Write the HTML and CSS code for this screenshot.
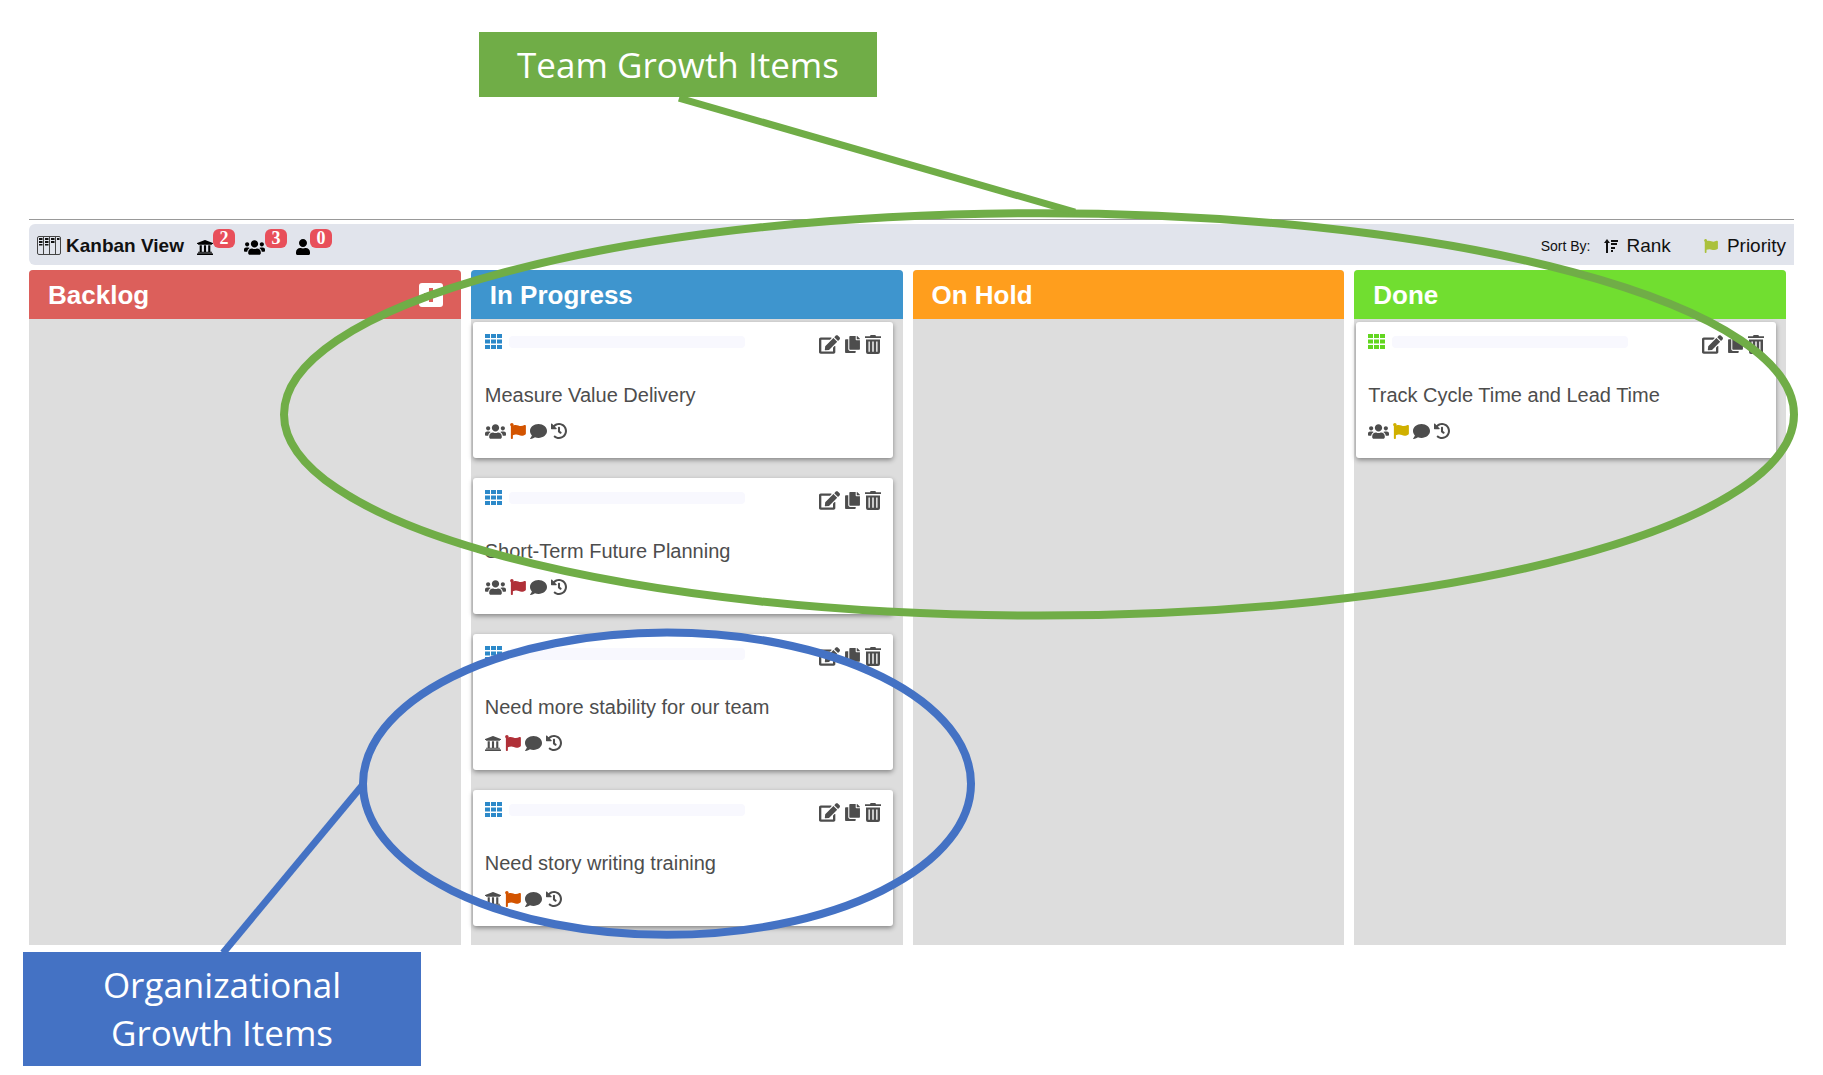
FILE: index.html
```html
<!DOCTYPE html>
<html lang="en">
<head>
  <meta charset="UTF-8" />
  <meta name="viewport" content="width=device-width, initial-scale=1.0" />
  <title>Kanban View</title>
  <link rel="stylesheet" href="styles.css">
</head>
<body>
  <!-- Icon set -->
  <svg class="icon-set" aria-hidden="true">
    <symbol id="board" viewBox="0 0 24 19">
      <path d="M.5 2Q.5.5 2 .5h20q1.500 0 1.500 1.500v15q0 1.500-1.500 1.500H2Q.5 18.500.5 17zM6.500.5v18M12.500.5v18M18.500.5v18" fill="none" stroke="#444" stroke-width="1"/>
      <path d="M2 2h3.500v2H2zM2 5h3.500v2H2zM2 8h3.500v1.500H2zM8 2h3.500v2H8zM8 5h3.500v2H8zM8 8h3.500v1.500H8zM14 2h3.500v2H14zM14 5h3.500v2H14zM20 2h2.500v2H20z" fill="#111"/>
    </symbol>
    <symbol id="bank" viewBox="16 32 480 448"><path d="M496 128v16a8 8 0 0 1-8 8h-24v12c0 6.627-5.373 12-12 12H60c-6.627 0-12-5.373-12-12v-12H24a8 8 0 0 1-8-8v-16a8 8 0 0 1 4.941-7.392l232-88a7.996 7.996 0 0 1 6.118 0l232 88A8 8 0 0 1 496 128zm-24 304H40c-13.255 0-24 10.745-24 24v16a8 8 0 0 0 8 8h464a8 8 0 0 0 8-8v-16c0-13.255-10.745-24-24-24zM96 192v192H60c-6.627 0-12 5.373-12 12v20h416v-20c0-6.627-5.373-12-12-12h-36V192h-64v192h-64V192h-64v192h-64V192H96z"/></symbol>
    <symbol id="users" viewBox="0 32 640 448"><path d="M96 224c35.3 0 64-28.7 64-64s-28.7-64-64-64-64 28.7-64 64 28.700 64 64 64zm448 0c35.300 0 64-28.700 64-64s-28.700-64-64-64-64 28.700-64 64 28.700 64 64 64zm32 32h-64c-17.600 0-33.500 7.100-45.100 18.600 40.300 22.100 68.900 62 75.100 109.400h66c17.700 0 32-14.300 32-32v-32c0-35.300-28.700-64-64-64zm-256 0c61.900 0 112-50.100 112-112S381.900 32 320 32 208 82.100 208 144s50.100 112 112 112zm76.800 32h-8.300c-20.800 10-43.900 16-68.500 16s-47.600-6-68.500-16h-8.300C179.600 288 128 339.600 128 403.200V432c0 26.500 21.500 48 48 48h288c26.500 0 48-21.500 48-48v-28.800c0-63.600-51.600-115.200-115.200-115.200zm-223.700-13.400C161.500 263.100 145.600 256 128 256H64c-35.300 0-64 28.700-64 64v32c0 17.700 14.300 32 32 32h65.900c6.300-47.400 34.900-87.300 75.200-109.400z"/></symbol>
    <symbol id="user" viewBox="0 0 448 512"><path d="M224 256c70.700 0 128-57.300 128-128S294.700 0 224 0 96 57.300 96 128s57.300 128 128 128zm89.600 32h-16.700c-22.200 10.200-46.900 16-72.900 16s-50.600-5.800-72.900-16h-16.700C60.200 288 0 348.200 0 422.400V464c0 26.500 21.500 48 48 48h352c26.500 0 48-21.500 48-48v-41.600c0-74.200-60.200-134.400-134.400-134.400z"/></symbol>
    <symbol id="rank" viewBox="0 0 14 14"><path d="M3 0l3 4H4v10H2V4H0zM7 1h7v2H7zM7 4h6v2H7zM7 8h4v2H7zM7 11h2v2H7z"/></symbol>
    <symbol id="flag" viewBox="8 0 504 512"><path d="M349.565 98.783C295.978 98.783 251.721 64 184.348 64c-24.955 0-47.309 4.384-68.045 12.013a55.947 55.947 0 0 0 3.586-23.562C118.117 24.015 94.806 1.206 66.338.048 34.345-1.254 8 24.296 8 56c0 19.026 9.497 35.825 24 45.945V488c0 13.255 10.745 24 24 24h16c13.255 0 24-10.745 24-24v-94.400c28.311-12.064 63.582-22.122 114.435-22.122 53.588 0 97.844 34.783 165.217 34.783 48.169 0 86.667-16.294 122.505-40.858C506.840 359.452 512 349.571 512 339.045v-243.100c0-23.393-24.269-38.870-45.485-29.016-34.338 15.948-76.454 31.854-116.950 31.854z"/></symbol>
    <symbol id="comment" viewBox="0 32 512 448"><path d="M256 32C114.600 32 0 125.100 0 240c0 49.600 21.400 95 57 130.700C44.500 421.100 2.700 466 2.200 466.500c-2.200 2.300-2.800 5.700-1.500 8.700S4.800 480 8 480c66.300 0 116-31.800 140.600-51.400 32.700 12.300 69 19.400 107.400 19.400 141.400 0 256-93.100 256-208S397.400 32 256 32z"/></symbol>
    <symbol id="history" viewBox="8 8 496 496"><path d="M504 255.531c.253 136.640-111.180 248.372-247.820 248.468-59.015.042-113.223-20.530-155.822-54.911-11.077-8.940-11.905-25.541-1.839-35.607l11.267-11.267c8.609-8.609 22.353-9.551 31.891-1.984C173.062 425.135 212.781 440 256 440c101.705 0 184-82.311 184-184 0-101.705-82.311-184-184-184-48.814 0-93.149 18.969-126.068 49.932l50.754 50.754c10.080 10.080 2.941 27.314-11.313 27.314H24c-8.837 0-16-7.163-16-16V38.627c0-14.254 17.234-21.393 27.314-11.314l49.372 49.372C129.209 34.136 189.552 8 256 8c136.810 0 247.747 110.780 248 247.531zm-180.912 78.784l9.823-12.630c8.138-10.463 6.253-25.542-4.210-33.679L288 256.349V152c0-13.255-10.745-24-24-24h-16c-13.255 0-24 10.745-24 24v135.651l65.409 50.874c10.463 8.137 25.541 6.253 33.679-4.210z"/></symbol>
    <symbol id="edit" viewBox="0 0 576 512"><path d="M402.600 83.200l90.200 90.200c3.800 3.800 3.800 10 0 13.800L274.400 405.600l-92.800 10.300c-12.400 1.400-22.900-9.100-21.500-21.500l10.300-92.800L388.800 83.200c3.800-3.800 10-3.800 13.800 0zm162-22.900l-48.800-48.800c-15.200-15.200-39.900-15.200-55.200 0l-35.400 35.400c-3.800 3.800-3.800 10 0 13.800l90.200 90.200c3.800 3.800 10 3.800 13.800 0l35.400-35.400c15.200-15.300 15.200-40 0-55.200zM384 346.200V448H64V128h229.800c3.200 0 6.200-1.300 8.500-3.500l40-40c7.600-7.600 2.200-20.500-8.500-20.500H48C21.500 64 0 85.500 0 112v352c0 26.500 21.500 48 48 48h352c26.500 0 48-21.500 48-48V306.200c0-10.700-12.900-16-20.500-8.500l-40 40c-2.200 2.300-3.500 5.300-3.500 8.500z"/></symbol>
    <symbol id="copy" viewBox="0 0 448 512"><path d="M320 448v40c0 13.255-10.745 24-24 24H24c-13.255 0-24-10.745-24-24V120c0-13.255 10.745-24 24-24h72v296c0 30.879 25.121 56 56 56h168zm0-344V0H152c-13.255 0-24 10.745-24 24v368c0 13.255 10.745 24 24 24h272c13.255 0 24-10.745 24-24V128H344c-13.200 0-24-10.800-24-24zm120.971-31.029L375.029 7.029A24 24 0 0 0 358.059 0H352v96h96v-6.059a24 24 0 0 0-7.029-16.970z"/></symbol>
    <symbol id="trash" viewBox="0 0 16 19"><path fill-rule="evenodd" d="M0 1.200h5L5.600 0h4.800l.6 1.200h5v1.900H0zM1 4.500h14V17q0 2-2 2H3q-2 0-2-2zM3.500 6.500v10.200h1.300V6.500zM7.300 6.500v10.200h1.400V6.500zM11.200 6.500v10.200h1.300V6.500z"/></symbol>
    <symbol id="grid" viewBox="0 0 17 15"><path d="M0 0h5v4H0zM6 0h5v4H6zM12 0h5v4h-5zM0 5.500h5v4H0zM6 5.500h5v4H6zM12 5.500h5v4h-5zM0 11h5v4H0zM6 11h5v4H6zM12 11h5v4h-5z"/></symbol>
    <symbol id="plus" viewBox="0 0 24 24"><path fill-rule="evenodd" d="M3 0h18q3 0 3 3v18q0 3-3 3H3q-3 0-3-3V3q0-3 3-3zM10 5v5H5v4h5v5h4v-5h5v-4h-5V5z"/></symbol>
  </svg>

  <div class="page">
    <div class="callout callout-team">Team Growth Items</div>

    <main class="board">
      <header class="toolbar">
        <svg class="board-icon"><use href="#board"/></svg>
        <h1>Kanban View</h1>
        <div class="counts">
          <div class="count"><svg class="i-bank"><use href="#bank"/></svg><span>2</span></div>
          <div class="count"><svg class="i-users"><use href="#users"/></svg><span>3</span></div>
          <div class="count"><svg class="i-user"><use href="#user"/></svg><span>0</span></div>
        </div>
        <div class="sort">
          <span class="sort-label">Sort By:</span>
          <button class="sort-rank"><svg class="i-rank"><use href="#rank"/></svg>Rank</button>
          <button class="sort-priority"><svg class="i-flag"><use href="#flag"/></svg>Priority</button>
        </div>
      </header>

      <div class="columns">
        <section class="column backlog">
          <div class="column-head">
            <h2>Backlog</h2>
            <button aria-label="Add item"><svg class="i-plus"><use href="#plus"/></svg></button>
          </div>
        </section>

        <section class="column progress">
          <div class="column-head"><h2>In Progress</h2></div>
          <article class="card">
            <div class="card-head">
              <svg class="i-grid"><use href="#grid"/></svg>
              <div class="bar"></div>
              <div class="actions">
                <button aria-label="Edit"><svg class="i-edit"><use href="#edit"/></svg></button>
                <button aria-label="Copy"><svg class="i-copy"><use href="#copy"/></svg></button>
                <button aria-label="Delete"><svg class="i-trash"><use href="#trash"/></svg></button>
              </div>
            </div>
            <h3>Measure Value Delivery</h3>
            <div class="card-foot">
              <svg class="i-users"><use href="#users"/></svg>
              <svg class="i-flag high"><use href="#flag"/></svg>
              <svg class="i-comment"><use href="#comment"/></svg>
              <svg class="i-history"><use href="#history"/></svg>
            </div>
          </article>
          <article class="card">
            <div class="card-head">
              <svg class="i-grid"><use href="#grid"/></svg>
              <div class="bar"></div>
              <div class="actions">
                <button aria-label="Edit"><svg class="i-edit"><use href="#edit"/></svg></button>
                <button aria-label="Copy"><svg class="i-copy"><use href="#copy"/></svg></button>
                <button aria-label="Delete"><svg class="i-trash"><use href="#trash"/></svg></button>
              </div>
            </div>
            <h3>Short-Term Future Planning</h3>
            <div class="card-foot">
              <svg class="i-users"><use href="#users"/></svg>
              <svg class="i-flag urgent"><use href="#flag"/></svg>
              <svg class="i-comment"><use href="#comment"/></svg>
              <svg class="i-history"><use href="#history"/></svg>
            </div>
          </article>
          <article class="card">
            <div class="card-head">
              <svg class="i-grid"><use href="#grid"/></svg>
              <div class="bar"></div>
              <div class="actions">
                <button aria-label="Edit"><svg class="i-edit"><use href="#edit"/></svg></button>
                <button aria-label="Copy"><svg class="i-copy"><use href="#copy"/></svg></button>
                <button aria-label="Delete"><svg class="i-trash"><use href="#trash"/></svg></button>
              </div>
            </div>
            <h3>Need more stability for our team</h3>
            <div class="card-foot">
              <svg class="i-bank"><use href="#bank"/></svg>
              <svg class="i-flag urgent"><use href="#flag"/></svg>
              <svg class="i-comment"><use href="#comment"/></svg>
              <svg class="i-history"><use href="#history"/></svg>
            </div>
          </article>
          <article class="card">
            <div class="card-head">
              <svg class="i-grid"><use href="#grid"/></svg>
              <div class="bar"></div>
              <div class="actions">
                <button aria-label="Edit"><svg class="i-edit"><use href="#edit"/></svg></button>
                <button aria-label="Copy"><svg class="i-copy"><use href="#copy"/></svg></button>
                <button aria-label="Delete"><svg class="i-trash"><use href="#trash"/></svg></button>
              </div>
            </div>
            <h3>Need story writing training</h3>
            <div class="card-foot">
              <svg class="i-bank"><use href="#bank"/></svg>
              <svg class="i-flag high"><use href="#flag"/></svg>
              <svg class="i-comment"><use href="#comment"/></svg>
              <svg class="i-history"><use href="#history"/></svg>
            </div>
          </article>
        </section>

        <section class="column hold">
          <div class="column-head"><h2>On Hold</h2></div>
        </section>

        <section class="column done">
          <div class="column-head"><h2>Done</h2></div>
          <article class="card">
            <div class="card-head">
              <svg class="i-grid"><use href="#grid"/></svg>
              <div class="bar"></div>
              <div class="actions">
                <button aria-label="Edit"><svg class="i-edit"><use href="#edit"/></svg></button>
                <button aria-label="Copy"><svg class="i-copy"><use href="#copy"/></svg></button>
                <button aria-label="Delete"><svg class="i-trash"><use href="#trash"/></svg></button>
              </div>
            </div>
            <h3>Track Cycle Time and Lead Time</h3>
            <div class="card-foot">
              <svg class="i-users"><use href="#users"/></svg>
              <svg class="i-flag medium"><use href="#flag"/></svg>
              <svg class="i-comment"><use href="#comment"/></svg>
              <svg class="i-history"><use href="#history"/></svg>
            </div>
          </article>
        </section>
      </div>
    </main>

    <div class="callout callout-org">Organizational<br>Growth Items</div>

    <!-- Rings and lines drawn over the board -->
    <svg class="rings" viewBox="0 0 1823 1075" preserveAspectRatio="none" aria-hidden="true">
      <g fill="none" stroke="#70ad47">
        <ellipse cx="1039" cy="414" rx="755" ry="201" stroke-width="8"/>
        <path d="M679 98l396 114" stroke-width="7"/>
      </g>
      <g fill="none" stroke="#4472c4">
        <ellipse cx="667" cy="783" rx="304" ry="151" stroke-width="8"/>
        <path d="M223 952l139-167" stroke-width="7"/>
      </g>
    </svg>
  </div>
</body>
</html>
```
FILE: styles.css
```css
* {
  margin: 0;
  padding: 0;
  box-sizing: border-box;
}

body {
  background: #fff;
  font-family: "Liberation Sans", Arial, sans-serif;
  color: #111;
}

button {
  border: none;
  background: none;
  font: inherit;
  color: inherit;
  cursor: pointer;
  display: flex;
  align-items: center;
}

svg {
  display: block;
  fill: currentColor;
  flex: none;
}

.icon-set {
  position: absolute;
  width: 0;
  height: 0;
}

.page {
  position: relative;
  padding: 32px 0 10px;
}

/* Callouts */
.callout {
  width: 398px;
  color: #fff;
  font-family: "Open Sans", "Noto Sans", sans-serif;
  font-size: 35px;
  line-height: 48px;
  text-align: center;
}

.callout-team {
  margin-left: 479px;
  padding: 9px 0 8px;
  background: #70ad47;
}

.callout-org {
  margin: 7px 0 0 23px;
  padding: 9px 0;
  background: #4472c4;
}

.rings {
  position: absolute;
  top: 0;
  left: 0;
  width: 100%;
  height: 100%;
  pointer-events: none;
}

/* Board */
.board {
  margin: 122px 29px 0;
  padding-top: 4px;
  border-top: 1px solid #999;
}

.toolbar {
  display: flex;
  align-items: center;
  height: 41px;
  padding: 2px 8px 0;
  background: #e1e4ec;
  border-radius: 6px 0 0 6px;
}

.board-icon {
  width: 24px;
  height: 19px;
}

.toolbar h1 {
  margin: 0 13px 0 5px;
  font-size: 19px;
  line-height: 24px;
}

.counts {
  display: flex;
  align-self: flex-start;
  gap: 9px;
  padding-top: 3px;
  color: #000;
}

.count {
  display: flex;
  align-items: flex-end;
}

.count span {
  width: 22px;
  margin-bottom: 7px;
  border-radius: 6px;
  background: #e84f5a;
  color: #fff;
  font: bold 18px/19px "Liberation Serif", serif;
  text-align: center;
}

.sort {
  display: flex;
  align-items: center;
  margin-left: auto;
  font-size: 19px;
}

.sort-label {
  font-size: 14px;
}

.sort-rank {
  gap: 9px;
  margin: 0 33px 0 13px;
}

.sort-priority {
  gap: 9px;
}

.sort-priority .i-flag {
  width: 14px;
  height: 14px;
  color: #abc13c;
}

/* Columns */
.columns {
  display: grid;
  grid-template-columns: repeat(4, 1fr);
  gap: 10px;
  margin-top: 5px;
  padding-right: 8px;
}

.column {
  padding-bottom: 19px;
  background: #ddd;
  border-radius: 4px 4px 0 0;
}

.column-head {
  display: flex;
  align-items: center;
  justify-content: space-between;
  height: 49px;
  padding: 0 18px 0 19px;
  border-radius: 4px 4px 0 0;
  color: #fff;
}

.column-head h2 {
  font-size: 26px;
  line-height: 32px;
}

.backlog .column-head { background: #dc5f5b; }
.progress .column-head { background: #3e95ce; }
.hold .column-head { background: #ff9e1d; }
.done .column-head { background: #71de30; }

.progress .i-grid { color: #2c89c9; }
.done .i-grid { color: #62d620; }

/* Cards */
.card {
  margin: 3px 10px 20px 2px;
  padding: 12px 12px 19px;
  background: #fff;
  border-radius: 3px;
  box-shadow: 0 2px 5px rgba(0, 0, 0, 0.4);
  color: #4d4d4d;
}

.card + .card {
  margin-top: 0;
}

.card:last-child {
  margin-bottom: 0;
}

.card-head {
  display: flex;
  height: 21px;
}

.bar {
  flex: 0 1 236px;
  height: 12px;
  margin: 2px 7px;
  border-radius: 4px;
  background: #f8f8fe;
}

.actions {
  display: flex;
  align-items: center;
  gap: 5px;
  margin-left: auto;
}

.card h3 {
  margin-top: 28px;
  font-size: 20px;
  font-weight: normal;
  line-height: 24px;
}

.card-foot {
  display: flex;
  align-items: center;
  gap: 4px;
  height: 16px;
  margin-top: 16px;
}

.high { color: #d35400; }
.urgent { color: #b03038; }
.medium { color: #d0b000; }

/* Icon sizes */
.i-bank { width: 16px; height: 15px; }
.i-users { width: 21px; height: 15px; }
.i-user { width: 14px; height: 16px; }
.i-rank { width: 14px; height: 14px; }
.i-flag { width: 16px; height: 16px; }
.i-comment { width: 17px; height: 15px; }
.i-history { width: 16px; height: 16px; }
.i-grid { width: 17px; height: 15px; }
.i-edit { width: 21px; height: 19px; }
.i-copy { width: 15px; height: 17px; }
.i-trash { width: 16px; height: 19px; }
.i-plus { width: 24px; height: 24px; }
```
